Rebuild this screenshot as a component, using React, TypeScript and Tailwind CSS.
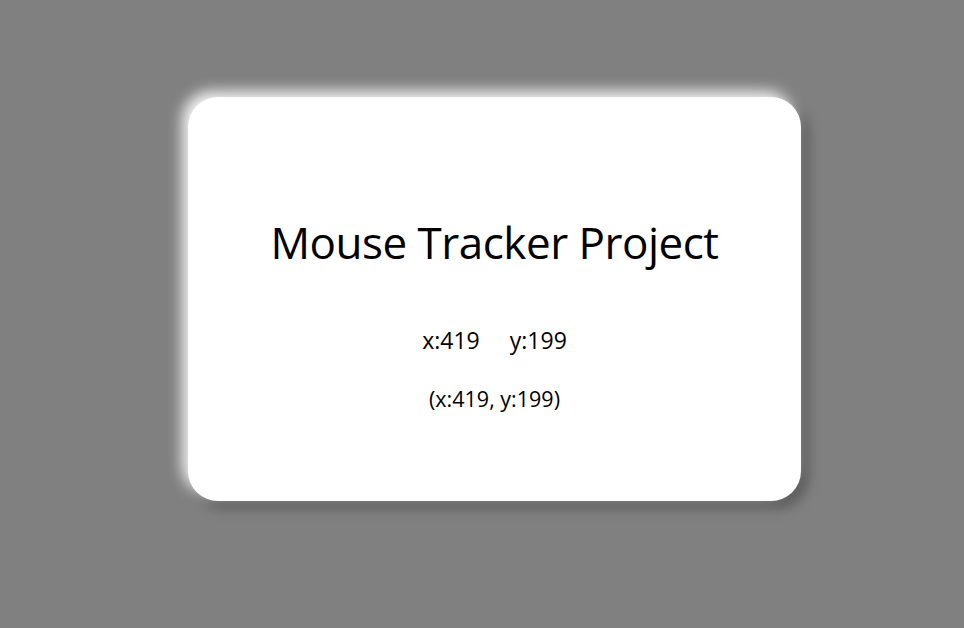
export default function App() {
  const x = 419;
  const y = 199;

  return (
    <div
      className="h-screen w-full bg-[#808080] pt-[97px] pl-[188px]"
      style={{ fontFamily: '"Open Sans", "Noto Sans", sans-serif' }}
    >
      <div className="flex h-[404px] w-[613px] flex-col items-center rounded-[30px] bg-white pt-[114px] text-black shadow-[-6px_-6px_14px_rgba(255,255,255,0.9),6px_6px_14px_rgba(0,0,0,0.35)]">
        <h1 className="text-[44px] leading-[62px] tracking-[-0.5px]">Mouse Tracker Project</h1>
        <div className="mt-[51px] flex gap-[30px] text-[23px] leading-[32px]">
          <span>x:{x}</span>
          <span>y:{y}</span>
        </div>
        <p className="mt-[28px] text-[21.5px] leading-[30px]">
          (x:{x}, y:{y})
        </p>
      </div>
    </div>
  );
}
